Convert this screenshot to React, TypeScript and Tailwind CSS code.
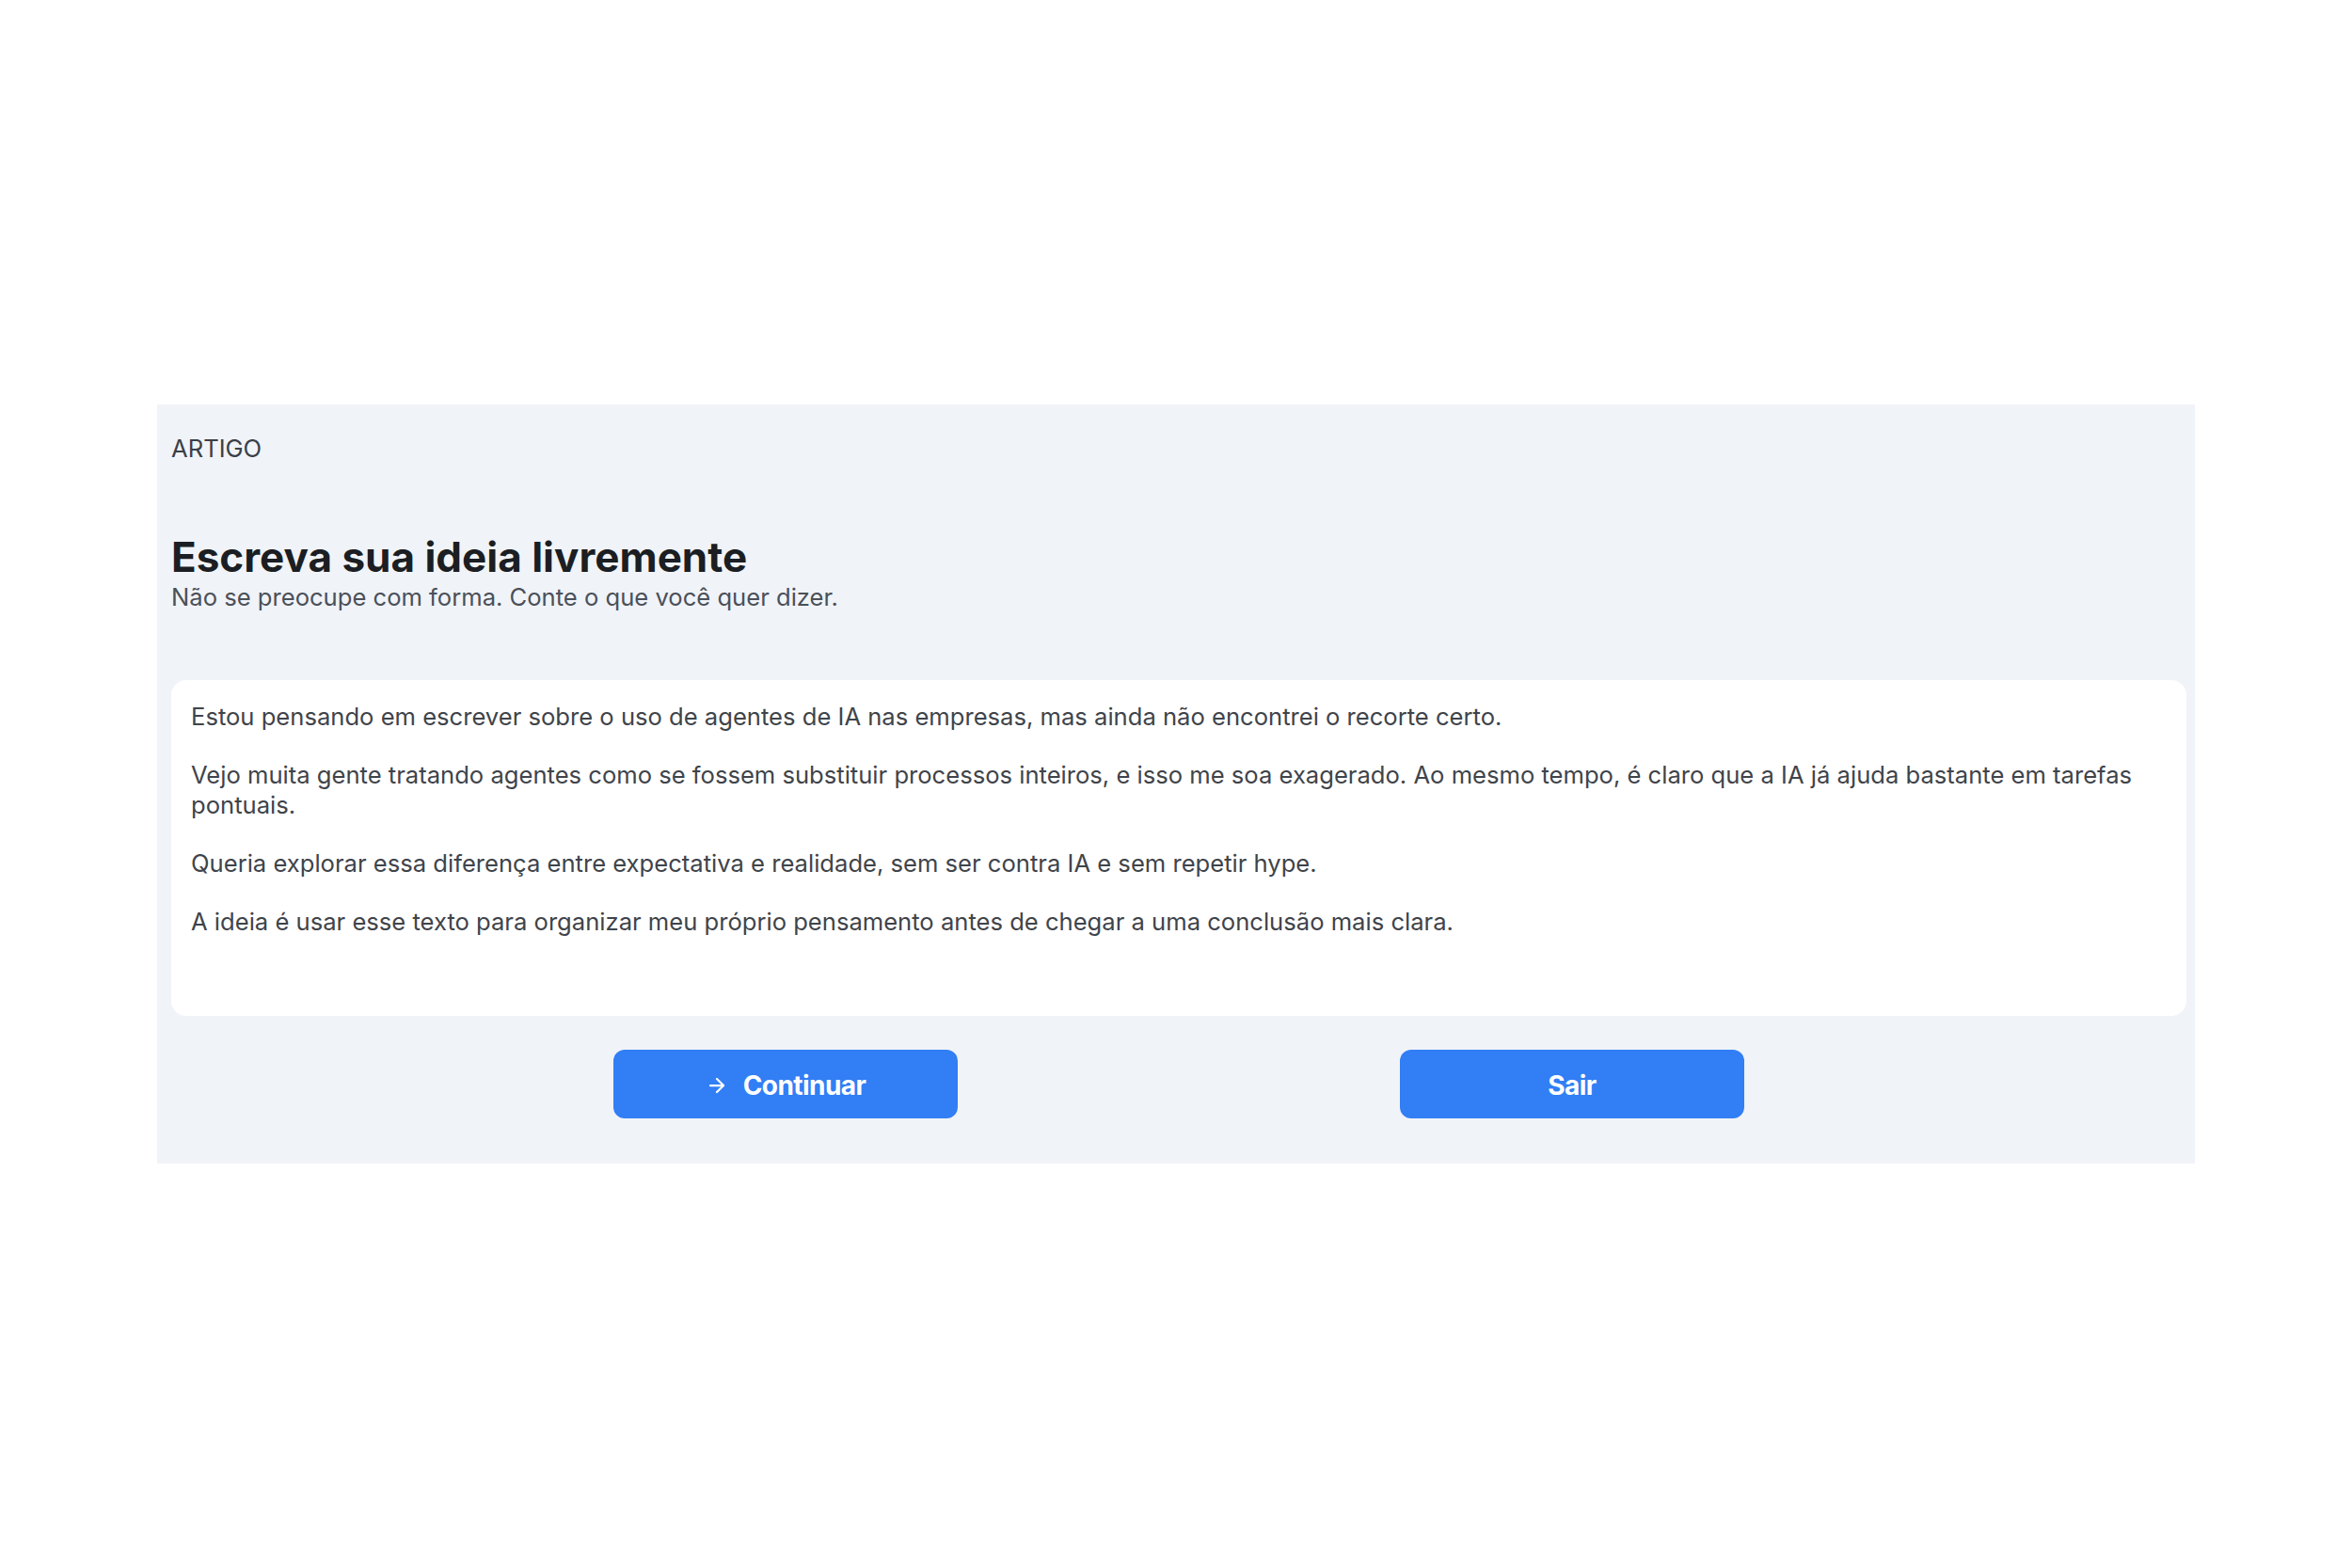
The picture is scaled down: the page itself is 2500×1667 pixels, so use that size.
import React, { useState } from "react";
import { ArrowRight } from "lucide-react";

const paragraphs = [
  "Estou pensando em escrever sobre o uso de agentes de IA nas empresas, mas ainda não encontrei o recorte certo.",
  "Vejo muita gente tratando agentes como se fossem substituir processos inteiros, e isso me soa exagerado. Ao mesmo tempo, é claro que a IA já ajuda bastante em tarefas pontuais.",
  "Queria explorar essa diferença entre expectativa e realidade, sem ser contra IA e sem repetir hype.",
  "A ideia é usar esse texto para organizar meu próprio pensamento antes de chegar a uma conclusão mais clara.",
];

const App: React.FC = () => {
  const [text] = useState<string[]>(paragraphs);

  return (
    <div
      className="min-h-screen w-full bg-white flex items-center justify-center"
      style={{ fontFamily: "Inter, 'Noto Sans', sans-serif" }}
    >
      <div className="w-[2166px] h-[807px] bg-[#f0f3f8] pl-[15px] pr-[9px] pt-[31px] flex flex-col">
        <div className="text-[25.6px] leading-[32px] text-[#3b4047]">ARTIGO</div>

        <h1 className="mt-[75px] text-[44px] leading-[48px] font-bold text-[#1b1e22]">
          Escreva sua ideia livremente
        </h1>
        <p className="mt-[3px] text-[25.6px] leading-[32px] text-[#4b5058]">
          Não se preocupe com forma. Conte o que você quer dizer.
        </p>

        {/* editor box */}
        <div className="mt-[72px] h-[357px] bg-white rounded-[16px] pl-[21px] pr-[21px] pt-[23px]">
          {text.map((p, i) => (
            <p key={i} className="text-[25.6px] leading-[32px] text-[#3f444a] mb-[30px]">
              {p}
            </p>
          ))}
        </div>

        <div className="mt-[36px] flex justify-evenly">
          <button className="w-[366px] h-[73px] pt-[2px] rounded-[12px] bg-[#317ef5] text-white text-[28px] font-bold tracking-[-0.02em] flex items-center justify-center gap-[16px]">
            <ArrowRight size={24} strokeWidth={2.25} />
            Continuar
          </button>
          <button className="w-[366px] h-[73px] pt-[2px] rounded-[12px] bg-[#317ef5] text-white text-[28px] font-bold tracking-[-0.02em] flex items-center justify-center">
            Sair
          </button>
        </div>
      </div>
    </div>
  );
};

export default App;
